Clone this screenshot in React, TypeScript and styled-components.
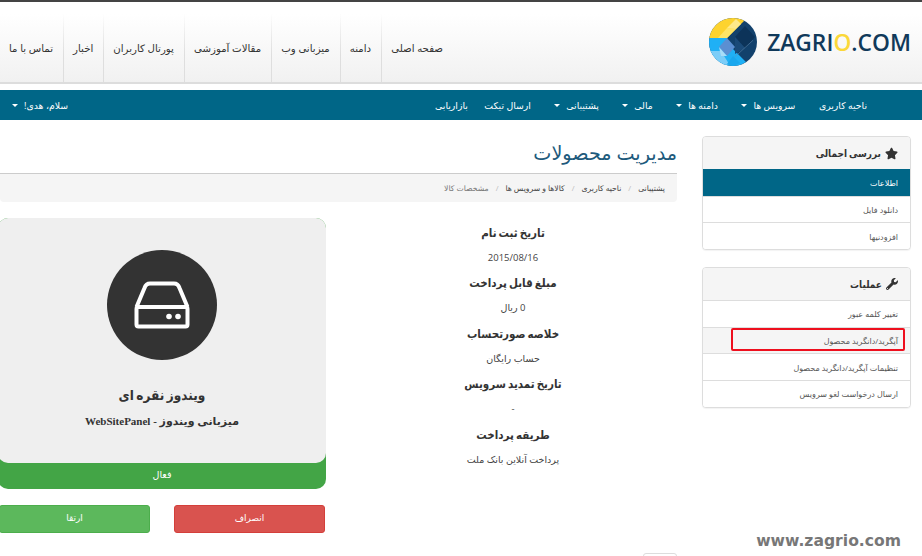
import styled, { createGlobalStyle } from "styled-components";
import { FaStar, FaWrench } from "react-icons/fa";

const GlobalStyle = createGlobalStyle`
  html, body {
    margin: 0;
    padding: 0;
    background: #fff;
  }
  body {
    font-family: "Open Sans", "DejaVu Sans", sans-serif;
    color: #333;
    overflow: hidden;
  }
`;

const Page = styled.div`
  width: 922px;
  height: 556px;
  overflow: hidden;
  position: relative;
  border-top: 2px solid #444;
  box-sizing: border-box;
  direction: rtl;
`;

const Header = styled.header`
  height: 80px;
  display: flex;
  justify-content: space-between;
  align-items: stretch;
  padding-right: 11px;
  background: linear-gradient(#fff 0%, #fff 15%, #f1f1f1 100%);
  border-bottom: 2px solid #ddd;
`;

const Logo = styled.div`
  display: flex;
  align-items: center;
  gap: 10px;
  direction: ltr;
  flex-direction: row-reverse;
`;

const LogoText = styled.span`
  font-weight: 600;
  font-size: 22.8px;
  color: #10395a;
  span {
    color: #fbd83a;
  }
`;

const TopLinks = styled.nav`
  display: flex;
  align-items: stretch;
  padding-top: 12px;
`;

const TopLink = styled.a`
  display: flex;
  align-items: center;
  padding: 0 10px 0 9px;
  font-size: 10.2px;
  color: #333;
  border-right: 1px solid;
  border-image: linear-gradient(rgba(222, 222, 222, 0), #dedede 60%) 1;
  &:first-child {
    border-right: 0;
    border-image: none;
  }
`;

const MainNav = styled.nav`
  margin-top: 6px;
  height: 30px;
  background: #006687;
  display: flex;
  justify-content: space-between;
  align-items: center;
  padding: 0 55px 0 12px;
  font-size: 9.3px;
  color: #fff;
`;

const NavGroup = styled.div`
  display: flex;
  align-items: center;
  gap: 23.5px;
`;

const NavItem = styled.span`
  display: flex;
  align-items: center;
  gap: 6px;
  &:last-child {
    margin-right: -7px;
  }
`;

const Caret = styled.i`
  width: 0;
  height: 0;
  border-left: 3px solid transparent;
  border-right: 3px solid transparent;
  border-top: 3px solid #fff;
`;

const Greeting = styled.span`
  display: flex;
  align-items: center;
  gap: 6px;
`;

const Body = styled.div`
  display: flex;
  gap: 25px;
  padding: 16px 11px 0 0;
`;

const Sidebar = styled.aside`
  width: 209px;
  flex: none;
  display: flex;
  flex-direction: column;
  gap: 17px;
`;

const Panel = styled.section`
  border: 1px solid #ddd;
  border-radius: 4px;
  overflow: hidden;
  background: #fff;
  box-shadow: 0 1px 1px rgba(0, 0, 0, 0.05);
`;

const PanelHead = styled.h3`
  margin: 0;
  height: 32px;
  padding: 0 12px;
  display: flex;
  align-items: center;
  gap: 4px;
  font-size: 10px;
  font-weight: 700;
  font-stretch: condensed;
  color: #333;
  background: #f5f5f5;
`;

const PanelItem = styled.a<{ $active?: boolean; $marked?: boolean }>`
  position: relative;
  display: flex;
  align-items: center;
  height: 25.7px;
  padding: 0 12px;
  font-size: 8px;
  border-top: 1px solid ${(p) => (p.$active ? "#006687" : "#ddd")};
  color: ${(p) => (p.$active ? "#fff" : "#555")};
  background: ${(p) => (p.$active ? "#006687" : p.$marked ? "#f5f5f5" : "#fff")};
`;

const Marker = styled.span`
  position: absolute;
  top: 0.5px;
  right: 5px;
  left: 28px;
  height: 18.5px;
  border: 2.5px solid #ee0f1e;
  border-radius: 2px;
`;

const Main = styled.main`
  flex: 1;
  min-width: 0;
`;

const Title = styled.h1`
  margin: 0;
  font-size: 19.2px;
  line-height: 33px;
  font-weight: 400;
  color: #1d5a7c;
  padding-bottom: 4px;
  border-bottom: 1px solid #ccc;
`;

const Breadcrumb = styled.ol`
  list-style: none;
  margin: 0;
  padding: 0 12px;
  height: 28px;
  display: flex;
  align-items: center;
  gap: 7px;
  font-size: 7.7px;
  background: #f5f5f5;
  border-radius: 0 0 4px 4px;
`;

const Crumb = styled.li<{ $muted?: boolean }>`
  color: ${(p) => (p.$muted ? "#777" : "#444")};
`;

const Slash = styled.li`
  color: #bbb;
`;

const Columns = styled.div`
  display: flex;
  gap: 23px;
  margin-top: 16px;
`;

const Details = styled.div`
  width: 328px;
  flex: none;
  padding-top: 1.5px;
  text-align: center;
`;

const DetailLabel = styled.h4`
  margin: 0;
  font-size: 11.5px;
  line-height: 25px;
  font-weight: 700;
  font-stretch: condensed;
  color: #333;
`;

const DetailValue = styled.p`
  margin: 0;
  font-size: 9.5px;
  line-height: 25.5px;
  color: #444;
`;

const CardColumn = styled.div`
  width: 328px;
  flex: none;
`;

const Card = styled.div`
  background: #43a546;
  border-radius: 10px;
  height: 271px;
  display: flex;
  flex-direction: column;
`;

const CardBody = styled.div`
  height: 245px;
  background: #efefef;
  border-radius: 10px;
  display: flex;
  flex-direction: column;
  align-items: center;
  padding-top: 32px;
  box-sizing: border-box;
`;

const IconCircle = styled.div`
  width: 110px;
  height: 110px;
  border-radius: 50%;
  background: #333;
  display: flex;
  align-items: center;
  justify-content: center;
  margin-bottom: 22px;
`;

const CardTitle = styled.h2`
  margin: 0;
  font-size: 13.5px;
  line-height: 26px;
  font-weight: 700;
  font-stretch: condensed;
  color: #333;
`;

const CardSub = styled.div`
  margin-top: 7px;
  font-family: "Liberation Serif", "DejaVu Sans", serif;
  font-size: 11px;
  font-weight: 700;
  color: #333;
`;

const CardStatus = styled.div`
  flex: 1;
  display: flex;
  align-items: center;
  justify-content: center;
  padding-bottom: 3px;
  font-size: 9.5px;
  color: #fff;
`;

const Actions = styled.div`
  display: flex;
  gap: 24px;
  margin-top: 16px;
  padding-right: 1px;
`;

const ActionButton = styled.button<{ $tone: "danger" | "success" }>`
  width: 151px;
  height: 28px;
  font-family: inherit;
  font-size: 9px;
  color: #fff;
  border-radius: 3px;
  background: ${(p) => (p.$tone === "danger" ? "#d9534f" : "#5cb85c")};
  border: 1px solid ${(p) => (p.$tone === "danger" ? "#d43f3a" : "#4cae4c")};
  padding: 0 0 3px;
`;

const PagerStub = styled.div`
  width: 34px;
  height: 24px;
  margin-top: 20px;
  border: 1px solid #ddd;
  border-radius: 3px;
  box-sizing: border-box;
`;

const Watermark = styled.div`
  position: absolute;
  right: 21px;
  bottom: 6px;
  direction: ltr;
  font-family: "DejaVu Sans", sans-serif;
  font-weight: 700;
  font-size: 15.6px;
  color: #777;
`;

const LogoMark = () => (
  <svg width="48" height="48" viewBox="0 0 48 48">
    <defs>
      <clipPath id="logo-disc">
        <circle cx="24" cy="24" r="24" />
      </clipPath>
    </defs>
    <g clipPath="url(#logo-disc)">
      <rect width="48" height="48" fill="#12416c" />
      {/* yellow wedge */}
      <polygon points="0,0 38,0 18,20 0,20" fill="#fdd32f" />
      <polygon points="9,20 18,10 27,11 18,20" fill="#ffe566" />
      <polygon points="18,10 27,1 32,6 27,11" fill="#ffe98a" />
      {/* blue lower left */}
      <polygon points="0,20 18,20 24,31 37,44 30,48 0,48" fill="#1fb0f5" />
      <polygon points="0,33 12,33 20,46 12,48 0,48" fill="#7ccdf8" />
      <polygon points="10,29 18,20 26,29 18,38" fill="#5b8fd2" />
      <polygon points="10,29 18,38 12,38" fill="#a8dcf8" />
      <polygon points="24,38 31,45 24,48 18,46" fill="#19a7ee" />
      {/* navy facets */}
      <polygon points="36,8 46,19 36,30 26,19" fill="#0c3359" />
      <polygon points="26,19 36,30 26,36" fill="#1a4a78" />
      <line x1="25.7" y1="39" x2="44" y2="22.3" stroke="#6a90b2" strokeWidth="0.5" />
    </g>
  </svg>
);

const DriveIcon = () => (
  <svg width="56" height="48" viewBox="0 0 56 48" fill="none" stroke="#fff" strokeWidth="4" strokeLinejoin="round">
    <path d="M2.5 26 L10.5 7 Q12 2.5 16 2.5 H40 Q44 2.5 45.5 7 L53.5 26" />
    <rect x="2.5" y="26" width="51" height="19.5" rx="2" />
    <circle cx="35" cy="35.5" r="2.8" fill="#fff" stroke="none" />
    <circle cx="44" cy="35.5" r="2.8" fill="#fff" stroke="none" />
  </svg>
);

const topLinks = ["صفحه اصلی", "دامنه", "میزبانی وب", "مقالات آموزشی", "پورتال کاربران", "اخبار", "تماس با ما"];

const navLinks = [
  { label: "ناحیه کاربری" },
  { label: "سرویس ها", caret: true },
  { label: "دامنه ها", caret: true },
  { label: "مالی", caret: true },
  { label: "پشتیبانی", caret: true },
  { label: "ارسال تیکت" },
  { label: "بازاریابی" },
];

const details = [
  ["تاریخ ثبت نام", "2015/08/16"],
  ["مبلغ قابل پرداخت", "0 ریال"],
  ["خلاصه صورتحساب", "حساب رایگان"],
  ["تاریخ تمدید سرویس", "-"],
  ["طریقه پرداخت", "پرداخت آنلاین بانک ملت"],
];

export default function App() {
  return (
    <>
      <GlobalStyle />
      <Page>
        <Header>
          <Logo>
            <LogoText>
              ZAGRI<span>O</span>.COM
            </LogoText>
            <LogoMark />
          </Logo>
          <TopLinks>
            {topLinks.map((link) => (
              <TopLink key={link}>{link}</TopLink>
            ))}
          </TopLinks>
        </Header>
        <MainNav>
          <NavGroup>
            {navLinks.map((link) => (
              <NavItem key={link.label}>
                {link.label}
                {link.caret && <Caret />}
              </NavItem>
            ))}
          </NavGroup>
          <Greeting>
            سلام، هدی!
            <Caret />
          </Greeting>
        </MainNav>
        <Body>
          <Sidebar>
            <Panel>
              <PanelHead>
                <FaStar size={13} />
                بررسی اجمالی
              </PanelHead>
              <PanelItem $active>اطلاعات</PanelItem>
              <PanelItem>دانلود فایل</PanelItem>
              <PanelItem>افزودنیها</PanelItem>
            </Panel>
            <Panel>
              <PanelHead>
                <FaWrench size={12} />
                عملیات
              </PanelHead>
              <PanelItem>تغییر کلمه عبور</PanelItem>
              <PanelItem $marked>
                آپگرید/دانگرید محصول
                <Marker />
              </PanelItem>
              <PanelItem>تنظیمات آپگرید/دانگرید محصول</PanelItem>
              <PanelItem>ارسال درخواست لغو سرویس</PanelItem>
            </Panel>
          </Sidebar>
          <Main>
            <Title>مدیریت محصولات</Title>
            <Breadcrumb>
              <Crumb>پشتیبانی</Crumb>
              <Slash>/</Slash>
              <Crumb>ناحیه کاربری</Crumb>
              <Slash>/</Slash>
              <Crumb>کالاها و سرویس ها</Crumb>
              <Slash>/</Slash>
              <Crumb $muted>مشخصات کالا</Crumb>
            </Breadcrumb>
            <Columns>
              <Details>
                {details.map(([label, value]) => (
                  <div key={label}>
                    <DetailLabel>{label}</DetailLabel>
                    <DetailValue>{value}</DetailValue>
                  </div>
                ))}
              </Details>
              <CardColumn>
                <Card>
                  <CardBody>
                    <IconCircle>
                      <DriveIcon />
                    </IconCircle>
                    <CardTitle>ویندوز نقره ای</CardTitle>
                    <CardSub>میزبانی ویندوز - WebSitePanel</CardSub>
                  </CardBody>
                  <CardStatus>فعال</CardStatus>
                </Card>
                <Actions>
                  <ActionButton $tone="danger">انصراف</ActionButton>
                  <ActionButton $tone="success">ارتقا</ActionButton>
                </Actions>
              </CardColumn>
            </Columns>
            <PagerStub />
          </Main>
        </Body>
        <Watermark>www.zagrio.com</Watermark>
      </Page>
    </>
  );
}
